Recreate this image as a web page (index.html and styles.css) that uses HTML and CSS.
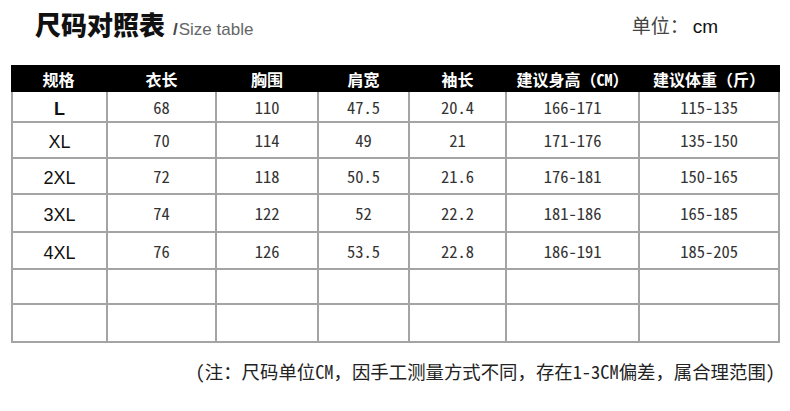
FILE: index.html
```html
<!DOCTYPE html>
<html lang="zh">
<head>
<meta charset="utf-8">
<link rel="stylesheet" href="styles.css">
</head>
<body>
<div class="page">
  <div class="top">
    <div class="title"><span class="cn">尺码对照表</span><span class="en"><b>/</b>Size table</span></div>
    <div class="unit"><span class="u1">单位：</span><span class="u2">cm</span></div>
  </div>
  <div class="grid">
    <div class="h">规格</div><div class="h">衣长</div><div class="h">胸围</div><div class="h">肩宽</div><div class="h">袖长</div><div class="h">建议身高（<span class="hw">CM</span>）</div><div class="h">建议体重（斤）</div>

    <div class="s r1">L</div><div class="n r1">68</div><div class="n r1">110</div><div class="n r1">47.5</div><div class="n r1">20.4</div><div class="n r1">166-171</div><div class="n r1">115-135</div>
    <div class="s r2">XL</div><div class="n r2">70</div><div class="n r2">114</div><div class="n r2">49</div><div class="n r2">21</div><div class="n r2">171-176</div><div class="n r2">135-150</div>
    <div class="s r3">2XL</div><div class="n r3">72</div><div class="n r3">118</div><div class="n r3">50.5</div><div class="n r3">21.6</div><div class="n r3">176-181</div><div class="n r3">150-165</div>
    <div class="s r4">3XL</div><div class="n r4">74</div><div class="n r4">122</div><div class="n r4">52</div><div class="n r4">22.2</div><div class="n r4">181-186</div><div class="n r4">165-185</div>
    <div class="s r5">4XL</div><div class="n r5">76</div><div class="n r5">126</div><div class="n r5">53.5</div><div class="n r5">22.8</div><div class="n r5">186-191</div><div class="n r5">185-205</div>
    <div class="e r6"></div><div class="e r6"></div><div class="e r6"></div><div class="e r6"></div><div class="e r6"></div><div class="e r6"></div><div class="e r6"></div>
    <div class="e r7"></div><div class="e r7"></div><div class="e r7"></div><div class="e r7"></div><div class="e r7"></div><div class="e r7"></div><div class="e r7"></div>
  </div>
  <div class="note"><span class="hw">(</span>注：尺码单位<span class="hw">CM</span>，因手工测量方式不同，存在<span class="hw">1-3CM</span>偏差，属合理范围<span class="hw">)</span></div>
</div>
</body>
</html>
```
FILE: styles.css
```css
html, body {
  margin: 0;
  padding: 0;
  background: #fff;
}
.page {
  width: 790px;
  height: 411px;
  box-sizing: border-box;
  padding: 0 12px 0 11px;
  font-family: "Noto Sans CJK SC", sans-serif;
  color: #222;
}
.hw {
  font-feature-settings: "hwid";
}
.top {
  display: flex;
  justify-content: space-between;
  align-items: flex-end;
  height: 40px;
  padding: 0 60px 0 24px;
}
.title {
  display: flex;
  align-items: baseline;
  gap: 8px;
}
.title .cn {
  font-size: 26px;
  font-weight: 900;
  color: #111;
  line-height: 30px;
}
.title .en {
  font-family: "Liberation Sans", Arial, sans-serif;
  font-size: 17px;
  color: #666;
}
.title .en b {
  color: #444;
  margin-right: 1px;
}
.unit {
  font-size: 19px;
  line-height: 24px;
  position: relative;
  top: -1px;
}
.unit .u1 {
  color: #444;
}
.unit .u2 {
  font-family: "Liberation Sans", Arial, sans-serif;
  color: #111;
  margin-left: 4px;
}
.grid {
  margin-top: 25px;
  display: grid;
  grid-template-columns: 95px 109px 102px 91px 97px 133px 140px;
  grid-template-rows: 27px 31px 36px 36px 38px 37px 35px 38px;
  border-left: 2px solid #a4a4a4;
  width: 767px;
  box-sizing: border-box;
}
.grid > div {
  display: flex;
  align-items: center;
  justify-content: center;
  box-sizing: border-box;
  border-right: 2px solid #a4a4a4;
  border-bottom: 2px solid #a4a4a4;
}
.grid > .h {
  background: #000;
  color: #fff;
  font-weight: 700;
  font-size: 16px;
  border-right-color: #000;
  border-bottom: none;
}
.grid > .h:first-child {
  margin-left: -2px;
}
.grid > .s {
  font-family: "Liberation Sans", Arial, sans-serif;
  font-size: 18px;
  color: #111;
  padding-top: 5px;
}
.grid > .s.r1 {
  font-weight: 700;
}
.grid > .n {
  font-size: 16.5px;
  color: #333;
  font-feature-settings: "hwid";
}
.note {
  margin-top: 17px;
  padding-right: 3px;
  text-align: right;
  font-size: 18.4px;
  color: #222;
  line-height: 22px;
}
```
